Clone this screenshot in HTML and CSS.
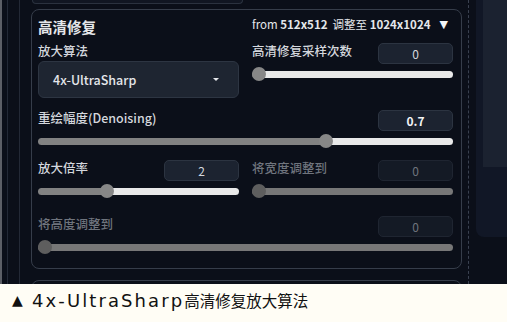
FILE: index.html
```html
<!DOCTYPE html>
<html lang="zh-CN">

<head>
  <meta charset="UTF-8">
  <meta name="viewport" content="width=device-width, initial-scale=1.0">
  <title>高清修复</title>
  <link rel="stylesheet" href="styles.css">
</head>

<body>
  <div class="shot">
    <div class="rails">
      <div></div>
      <div></div>
      <div></div>
    </div>

    <div class="main">
      <div class="stub"></div>

      <section class="panel">
        <div class="head">
          <h2 class="title">高清修复</h2>
          <div class="res">
            <span>from <b>512x512</b>&nbsp; 调整至 <b>1024x1024</b></span>
            <span class="arrow">▼</span>
          </div>
        </div>

        <div class="row">
          <div class="field">
            <label class="label">放大算法</label>
            <div class="select">
              <span>4x-UltraSharp</span>
              <i class="caret"></i>
            </div>
          </div>
          <div class="field">
            <div class="slider-head">
              <label class="label">高清修复采样次数</label>
              <div class="num">0</div>
            </div>
            <div class="range">
              <div class="fill" style="width: 7px"></div>
              <div class="knob"></div>
              <div class="rest"></div>
            </div>
          </div>
        </div>

        <div class="row wide">
          <div class="field">
            <div class="slider-head">
              <label class="label">重绘幅度(Denoising)</label>
              <div class="num strong">0.7</div>
            </div>
            <div class="range">
              <div class="fill" style="width: calc(7px + 0.7 * (100% - 14px))"></div>
              <div class="knob"></div>
              <div class="rest"></div>
            </div>
          </div>
        </div>

        <div class="row">
          <div class="field">
            <div class="slider-head">
              <label class="label">放大倍率</label>
              <div class="num">2</div>
            </div>
            <div class="range">
              <div class="fill" style="width: calc(7px + 0.3333 * (100% - 14px))"></div>
              <div class="knob"></div>
              <div class="rest"></div>
            </div>
          </div>
          <div class="field off">
            <div class="slider-head">
              <label class="label">将宽度调整到</label>
              <div class="num">0</div>
            </div>
            <div class="range">
              <div class="fill" style="width: 7px"></div>
              <div class="knob"></div>
              <div class="rest"></div>
            </div>
          </div>
        </div>

        <div class="row wide last">
          <div class="field off">
            <div class="slider-head">
              <label class="label">将高度调整到</label>
              <div class="num">0</div>
            </div>
            <div class="range">
              <div class="fill" style="width: 7px"></div>
              <div class="knob"></div>
              <div class="rest"></div>
            </div>
          </div>
        </div>
      </section>

      <div class="panel next"></div>
    </div>

    <div class="gutter"></div>

    <div class="side">
      <div class="side-box">
        <div class="side-inner"></div>
      </div>
    </div>
  </div>

  <p class="caption"><span class="tri">▲</span><span class="en">4x-UltraSharp</span>高清修复放大算法</p>
</body>

</html>
```

FILE: styles.css
```css
* {
  margin: 0;
  padding: 0;
  box-sizing: border-box;
}

body {
  width: 507px;
  height: 322px;
  overflow: hidden;
  background: #fffdf5;
  font-family: "Noto Sans CJK SC", "Noto Sans", sans-serif;
}

.shot {
  height: 284px;
  display: flex;
  background: #0b0f19;
  overflow: hidden;
}

/* left edge lines */
.rails {
  width: 31px;
  display: flex;
}

.rails div:nth-child(1) {
  width: 7px;
  border-left: 2px solid #5c5f66;
}

.rails div:nth-child(2) {
  width: 12px;
  border-left: 1px solid #232936;
}

.rails div:nth-child(3) {
  width: 12px;
  border-left: 1px solid #232936;
}

.main {
  width: 431px;
}

.stub {
  height: 4px;
  width: 211px;
  margin-left: 1px;
  background: #111622;
  border: 1px solid #2b323f;
  border-top: none;
  border-radius: 0 0 8px 8px;
}

.panel {
  margin-top: 5px;
  height: 260px;
  border: 1px solid #363d4a;
  border-radius: 8px;
  padding: 0 8px 0 6px;
}

.panel.next {
  margin-top: 11px;
  height: 30px;
}

.head {
  height: 33px;
  padding-top: 8px;
  display: grid;
  grid-template-columns: 1fr 1fr;
  column-gap: 13px;
  align-items: start;
}

.title {
  font-size: 14.5px;
  line-height: 18px;
  font-weight: 700;
  color: #e5e7eb;
}

.res {
  display: flex;
  justify-content: space-between;
  padding-right: 5px;
  font-size: 11.5px;
  line-height: 12px;
  color: #e5e7eb;
}

.res b {
  font-weight: 700;
}

.arrow {
  font-family: "DejaVu Sans", sans-serif;
  font-size: 11px;
  line-height: 14px;
  color: #f3f4f6;
}

.row {
  display: grid;
  grid-template-columns: 1fr 1fr;
  column-gap: 13px;
  margin-top: 12px;
}

.head + .row {
  margin-top: 0;
}

.row.wide {
  grid-template-columns: 1fr;
}

.row.wide:nth-of-type(2) {
  margin-top: 13px;
}

.row.last {
  margin-top: 18px;
}

.label {
  display: block;
  font-size: 12.5px;
  line-height: 16px;
  font-weight: 500;
  color: #d4d7dd;
}

.off .label {
  color: #6f747d;
}

.select {
  margin-top: 2px;
  height: 37px;
  background: #1e2531;
  border: 1px solid #2d3542;
  border-radius: 6px;
  display: flex;
  align-items: center;
  justify-content: space-between;
  padding: 0 19px 0 14px;
  font-size: 12.5px;
  font-weight: 500;
  color: #e5e7eb;
}

.caret {
  border-left: 3px solid transparent;
  border-right: 3px solid transparent;
  border-top: 3px solid #e5e7eb;
}

.slider-head {
  height: 21px;
  display: flex;
  justify-content: space-between;
  align-items: flex-start;
}

.num {
  width: 75px;
  height: 21px;
  background: #1c2330;
  border: 1px solid #2c3441;
  border-radius: 5px;
  text-align: center;
  font-size: 12px;
  line-height: 19px;
  color: #d4d7dd;
}

.num.strong {
  font-weight: 700;
  color: #f3f4f6;
}

.off .num {
  background: #141a25;
  border-color: #1f2531;
  color: #6f747d;
}

.range {
  margin-top: 3px;
  height: 14px;
  display: flex;
  align-items: center;
}

.fill {
  height: 7px;
  background: #828282;
  border-radius: 4px 0 0 4px;
}

.knob {
  width: 14px;
  height: 14px;
  margin: 0 -7px;
  border-radius: 50%;
  background: #878787;
  position: relative;
  z-index: 1;
}

.rest {
  flex: 1;
  height: 7px;
  background: #e9e9e9;
  border-radius: 0 4px 4px 0;
}

.off .fill,
.off .rest {
  background: #777;
}

.off .knob {
  background: #5e5e5e;
}

.gutter {
  width: 8px;
  margin-left: 6px;
  border-left: 1px dashed #3a4150;
}

.side {
  flex: 1;
}

.side-box {
  height: 237px;
  background: #111726;
  border-radius: 0 0 0 8px;
  padding-left: 7px;
}

.side-inner {
  height: 167px;
  background: #1b2230;
}

.caption {
  height: 38px;
  padding: 0 0 6px 12px;
  display: flex;
  align-items: center;
  font-size: 15.5px;
  color: #111;
}

.tri {
  font-family: "DejaVu Sans", sans-serif;
  font-size: 14px;
  width: 20px;
}

.en {
  font-family: "DejaVu Sans", sans-serif;
  font-size: 18px;
  letter-spacing: 2.1px;
}
```
